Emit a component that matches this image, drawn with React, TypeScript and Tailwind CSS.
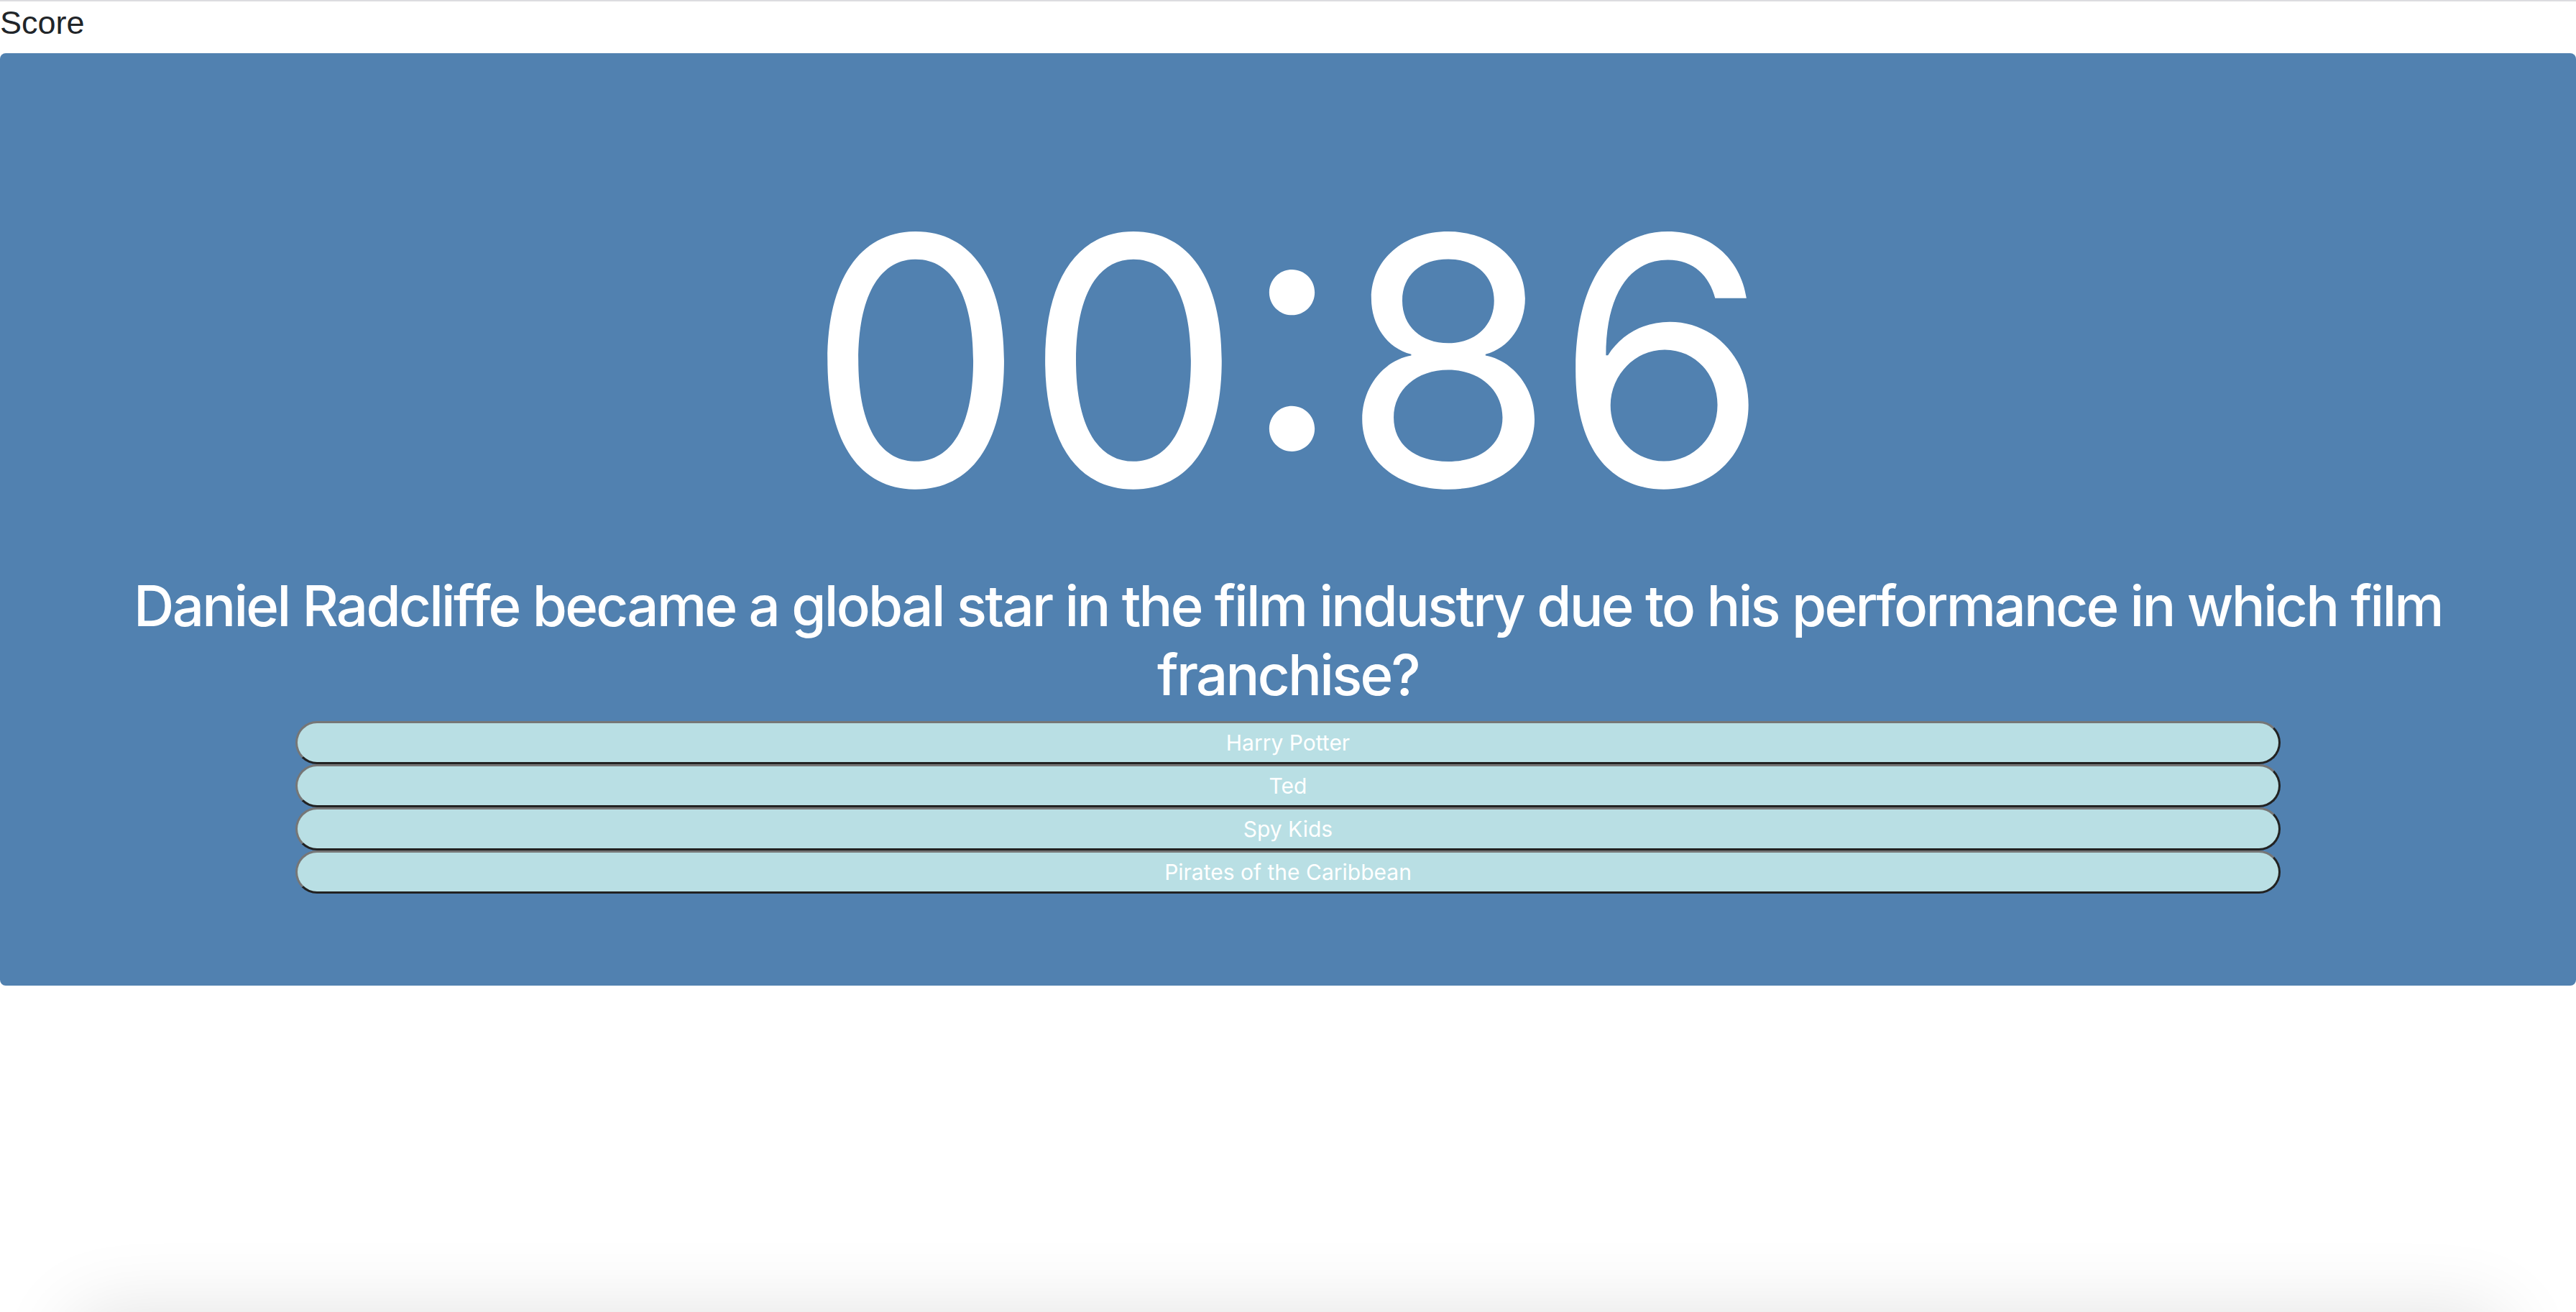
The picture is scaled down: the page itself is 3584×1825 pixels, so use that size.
const answers = ['Harry Potter', 'Ted', 'Spy Kids', 'Pirates of the Caribbean'];

function AnswerButton({ label }: { label: string }) {
  return (
    <button className="h-[60px] w-full rounded-full border-[3px] border-t-[#767676] border-l-[#767676] border-b-[#222222] border-r-[#222222] bg-[#b9dfe4] text-[30px] text-white flex items-center justify-center">
      {label}
    </button>
  );
}

export default function App() {
  return (
    <div className="min-h-screen bg-white overflow-hidden">
      <div className="h-[2px] bg-[#dcdce0]" />
      <div className="pt-[7px] pb-[20px] text-[45px] leading-[45px] text-[#212529] font-['Liberation_Sans',Arial,sans-serif]">
        Score
      </div>

      <div className="rounded-lg bg-[#5181b0] pt-[140px] pb-[128px] flex flex-col items-center text-white font-['Inter','Noto_Sans',sans-serif]">
        <div className="text-[480px] leading-[576px] font-normal">00:86</div>
        <h1 className="mt-[5px] px-4 text-[78px] leading-[96px] font-medium tracking-[-0.035em] text-center">
          Daniel Radcliffe became a global star in the film industry due to his performance in which film franchise?
        </h1>
        <div className="mt-[16px] w-[2762px] flex flex-col">
          {answers.map((a) => (
            <AnswerButton key={a} label={a} />
          ))}
        </div>
      </div>

      <div className="mt-[455px] mx-[100px] h-[300px] bg-white rounded-[40px] shadow-[0_0_110px_rgba(0,0,0,0.12)]" />
    </div>
  );
}
